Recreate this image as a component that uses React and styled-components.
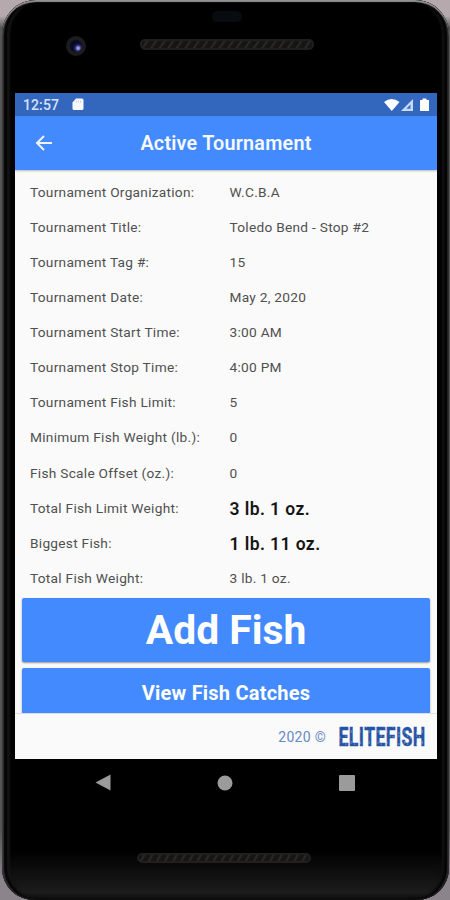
import React from "react";
import styled, { createGlobalStyle } from "styled-components";

const GlobalStyle = createGlobalStyle`
  * { box-sizing: border-box; }
  body { margin: 0; background: #a79fa3; font-family: Roboto, "Noto Sans", sans-serif; }
`;

const Stage = styled.main`
  width: 450px;
  height: 900px;
  overflow: hidden;
  background: linear-gradient(#b5a9ad 0 16px, #555 28px 830px, #8b858b 880px);
`;

const Phone = styled.div`
  display: flex;
  flex-direction: column;
  width: 447px;
  height: 900px;
  margin-left: 2px;
  padding: 0 10px 0 13px;
  border-radius: 34px 34px 32px 32px;
  background: linear-gradient(#000 0 850px, #1c1c1c 893px, #080808);
  box-shadow: inset 0 2px 1px #929292, inset 2px 0 1px #303030, inset 5px 0 1px #050505,
    inset 8px 0 2px #131313, inset -2px 0 1px #242424, inset -5px 0 2px #050505,
    inset -7px 0 2px #131313;
`;

const TopBezel = styled.div`
  height: 93px;
  display: grid;
  grid-template-columns: 125px 174px 1fr;
  grid-template-rows: 38px 12px;
  align-items: center;
`;

const Sensor = styled.span`
  grid-column: 2;
  width: 30px;
  height: 11px;
  margin: -6px 0 0 72px;
  border-radius: 6px;
  background: #080b10;
`;

const Camera = styled.span`
  grid-column: 1;
  grid-row: 2;
  width: 20px;
  height: 20px;
  margin: 3px 0 0 51px;
  border: 4px solid #1c1c1d;
  border-radius: 50%;
  background: radial-gradient(circle at 68% 68%, #9797e8 0 1px, #272b72 3px, #070b27 5px);
`;

const Grille = styled.span`
  grid-column: 2;
  height: ${({ $bottom }) => ($bottom ? "10px" : "11px")};
  width: 174px;
  border: 2px solid #211f1d;
  border-radius: 5px;
  background: repeating-linear-gradient(
    ${({ $bottom }) => ($bottom ? "120deg" : "125deg")},
    #151513 0 3px, #292826 4px 5px, #181816 6px 7px
  );
`;

const Screen = styled.section`
  display: flex;
  flex-direction: column;
  width: 422px;
  height: 666px;
  background: #fafafa;
`;

const StatusBar = styled.div`
  display: flex;
  align-items: center;
  height: 23px;
  padding: 0 7px 0 8px;
  background: #3367bd;
  color: #e8f0ff;
`;

const Clock = styled.time`
  width: 49px;
  font-size: 14px;
  font-weight: 500;
  letter-spacing: 0.1px;
  opacity: 0.9;
`;

const Indicators = styled.svg`
  margin-left: auto;
`;

const AppBar = styled.header`
  display: grid;
  grid-template-columns: 58px 1fr 58px;
  align-items: center;
  height: 54px;
  background: #448aff;
  box-shadow: 0 1px 2px #0004;
`;

const BackButton = styled.button`
  display: flex;
  margin: 0;
  padding: 0 0 0 20px;
  border: 0;
  background: none;
`;

const Title = styled.h1`
  margin: 2px 0 0;
  text-align: center;
  color: #f6f9ff;
  font-size: 19.8px;
  font-weight: 600;
  line-height: 24px;
  letter-spacing: 0.22px;
`;

const Details = styled.dl`
  height: 428px;
  margin: 0;
  padding: 4px 15px 0;
`;

const DetailRow = styled.div`
  display: grid;
  grid-template-columns: 199.5px 1fr;
  align-items: center;
  height: 35.14px;
`;

const Label = styled.dt`
  color: #505050;
  font-size: 13.7px;
  letter-spacing: 0.27px;
  white-space: nowrap;
`;

const Value = styled.dd`
  margin: 0;
  padding-top: ${({ $strong }) => ($strong ? "2px" : "0")};
  color: ${({ $strong }) => ($strong ? "#151515" : "#505050")};
  font-size: ${({ $strong }) => ($strong ? "17.5px" : "13.7px")};
  font-weight: ${({ $strong }) => ($strong ? 600 : 400)};
  letter-spacing: ${({ $strong }) => ($strong ? "0.42px" : "0.27px")};
`;

const Actions = styled.div`
  display: flex;
  flex-direction: column;
  gap: 6px;
  height: 115px;
  padding: 0 7px;
`;

const ActionButton = styled.button`
  height: ${({ $large }) => ($large ? "64px" : "45px")};
  padding: ${({ $large }) => ($large ? "0" : "4px 0 0")};
  border: 0;
  border-radius: ${({ $large }) => ($large ? "2px" : "2px 2px 0 0")};
  background: #448aff;
  box-shadow: 0 1px 2px #0006;
  color: #fff;
  font: ${({ $large }) => ($large ? "700 40.8px" : "700 20px")}/1 Roboto, sans-serif;
  letter-spacing: ${({ $large }) => ($large ? "0" : "0.22px")};
`;

const Footer = styled.footer`
  display: flex;
  align-items: center;
  justify-content: flex-end;
  height: 46px;
  padding-right: 12px;
  border-top: 1px solid #dedee8;
  background: #fafafa;
  color: #6889c4;
  font-size: 14px;
  letter-spacing: 0.3px;
`;

const Brand = styled.svg`
  margin-left: 11px;
  letter-spacing: 0.6px;
`;

const NavBar = styled.nav`
  display: flex;
  align-items: center;
  justify-content: space-between;
  height: 47px;
  padding: 0 84px 0 80px;
`;

const BottomBezel = styled.div`
  display: flex;
  padding: 47px 0 0 122px;
`;

const details = [
  ["Tournament Organization:", "W.C.B.A"],
  ["Tournament Title:", "Toledo Bend - Stop #2"],
  ["Tournament Tag #:", "15"],
  ["Tournament Date:", "May 2, 2020"],
  ["Tournament Start Time:", "3:00 AM"],
  ["Tournament Stop Time:", "4:00 PM"],
  ["Tournament Fish Limit:", "5"],
  ["Minimum Fish Weight (lb.):", "0"],
  ["Fish Scale Offset (oz.):", "0"],
  ["Total Fish Limit Weight:", "3 lb. 1 oz.", true],
  ["Biggest Fish:", "1 lb. 11 oz.", true],
  ["Total Fish Weight:", "3 lb. 1 oz."],
];

export default function App() {
  return (
    <Stage>
      <GlobalStyle />
      <Phone>
        <TopBezel>
          <Sensor />
          <Camera />
          <Grille />
        </TopBezel>
        <Screen>
          <StatusBar>
            <Clock>12:57</Clock>
            <svg width="12" height="13" viewBox="0 0 12 13" aria-hidden="true">
              <path d="M4 .5h6q1.5 0 1.5 1.5v8.5q0 1.5-1.5 1.5H2Q.5 12 .5 10.5V4.5z" fill="#f7faff" />
              <path d="M4.5 2.5V5M6.5 2.5V5M8.5 2.5V5" stroke="#c1d2ef" strokeWidth=".8" />
            </svg>
            <Indicators width="46" height="14" viewBox="0 0 46 14" aria-hidden="true">
              <path d="M0 4Q7.5-2 15.5 4L7.8 13z" fill="#fff" />
              <path d="M29 1v12H17z" fill="#c7dafa" />
              <path d="M26.5 6.5v4.3h-4.2z" fill="#3c6dc0" />
              <path d="M36 2h2.5V.5h4V2H45v11h-9V2z" fill="#fff" />
            </Indicators>
          </StatusBar>
          <AppBar>
            <BackButton aria-label="Back">
              <svg width="18" height="16" viewBox="0 0 18 16" fill="none" stroke="#edf4ff" strokeWidth="2">
                <path d="M17 8H2M9 1L2 8l7 7" />
              </svg>
            </BackButton>
            <Title>Active Tournament</Title>
          </AppBar>
          <Details>
            {details.map(([label, value, strong]) => (
              <DetailRow key={label}>
                <Label>{label}</Label>
                <Value $strong={strong}>{value}</Value>
              </DetailRow>
            ))}
          </Details>
          <Actions>
            <ActionButton $large>Add Fish</ActionButton>
            <ActionButton>View Fish Catches</ActionButton>
          </Actions>
          <Footer>
            <span>2020 ©</span>
            <Brand width="88" height="34" viewBox="0 0 88 34">
              <defs>
                <pattern id="worn" width="13" height="11" patternUnits="userSpaceOnUse">
                  <rect width="13" height="11" fill="#2654a5" />
                  <path d="M2 1v3M6 6v3M11 0v2M11 8v2" stroke="#88a2cf" strokeWidth="1.2" />
                </pattern>
              </defs>
              <text transform="translate(1.5 26) scale(.68 1)" fill="url(#worn)" stroke="#2654a5" strokeWidth=".45" fontFamily="Roboto" fontSize="26" fontWeight="700">ELITEFISH</text>
            </Brand>
          </Footer>
        </Screen>
        <NavBar aria-label="Device navigation">
          <svg width="16" height="17" viewBox="0 0 16 17"><path d="M15.5.5v16L.5 8.5z" fill="#9b9b9b" /></svg>
          <svg width="16" height="16" viewBox="0 0 16 16"><circle cx="8" cy="8" r="7.5" fill="#9b9b9b" /></svg>
          <svg width="16" height="16" viewBox="0 0 16 16"><rect width="16" height="16" rx="1" fill="#9b9b9b" /></svg>
        </NavBar>
        <BottomBezel>
          <Grille $bottom />
        </BottomBezel>
      </Phone>
    </Stage>
  );
}
